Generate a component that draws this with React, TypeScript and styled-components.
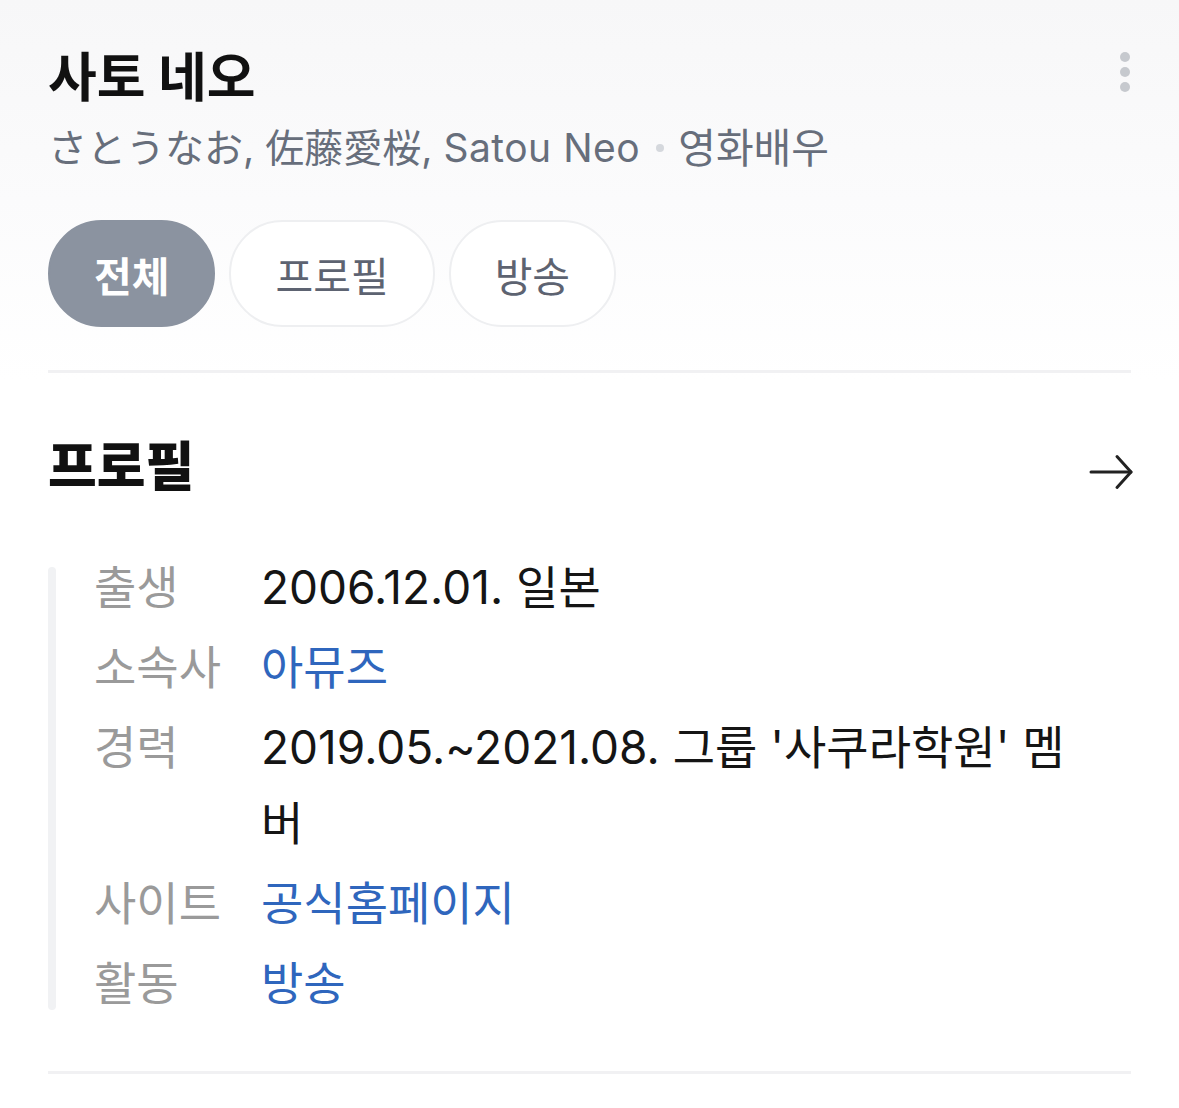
import React from "react";
import styled, {createGlobalStyle} from "styled-components";

const GlobalStyle = createGlobalStyle`
    html, body {
        margin: 0;
        padding: 0;
    }
    body {
        background: linear-gradient(180deg, #f7f7f8 0px, #fbfbfc 200px, #ffffff 380px);
        font-family: Inter, "Noto Sans CJK KR", "Noto Sans CJK JP", sans-serif;
        min-height: 1108px;
    }
`;

const Page = styled.div`
    padding: 0 48px;
`;

const Header = styled.header`
    position: relative;
    padding-top: 48px;
`;

const Title = styled.h1`
    margin: 0;
    font-size: 53px;
    line-height: 60px;
    font-weight: 700;
    color: #111;
`;

const Subtitle = styled.div`
    margin-top: 12px;
    font-size: 39px;
    line-height: 56px;
    color: #676e7b;
    display: flex;
    align-items: center;
    .latin {
        letter-spacing: 0.5px;
    }
    .ko {
        font-size: 41px;
    }
    .dot {
        width: 8px;
        height: 8px;
        border-radius: 50%;
        background: #d5d8dd;
        margin: 0 14px 0 16px;
    }
`;

const MoreButton = styled.button`
    position: absolute;
    right: -6px;
    top: 48px;
    width: 24px;
    height: 48px;
    padding: 0;
    border: 0;
    background: none;
    display: flex;
    flex-direction: column;
    align-items: center;
    justify-content: center;
    gap: 5px;
    span {
        width: 10px;
        height: 10px;
        border-radius: 50%;
        background: #c6c9ce;
    }
`;

const Tabs = styled.nav`
    margin-top: 44px;
    display: flex;
    gap: 14px;
`;

const Tab = styled.button<{active?: boolean}>`
    height: 107px;
    padding: 0 44px;
    border-radius: 54px;
    box-sizing: border-box;
    border: 2px solid ${props => props.active ? '#8b93a0' : '#eeeff1'};
    background: ${props => props.active ? '#8b93a0' : '#ffffff'};
    color: ${props => props.active ? '#ffffff' : '#5d6371'};
    font-family: inherit;
    font-size: 41px;
    font-weight: ${props => props.active ? 700 : 400};
    cursor: pointer;
`;

const Divider = styled.hr<{top: number}>`
    margin: ${props => props.top}px 0 0;
    border: 0;
    height: 3px;
    background: #f1f1f3;
`;

const SectionHead = styled.div`
    margin-top: 63px;
    display: flex;
    align-items: center;
    justify-content: space-between;
    h2 {
        margin: 0;
        font-size: 53px;
        line-height: 60px;
        font-weight: 800;
        color: #111;
    }
    svg {
        width: 48px;
        height: 48px;
        margin-right: -4px;
        margin-top: 14px;
    }
`;

const InfoBox = styled.div`
    margin-top: 51px;
    display: flex;
`;

const Bar = styled.div`
    width: 8px;
    border-radius: 4px;
    background: #f1f2f4;
    margin: 18px 0 11px;
    flex-shrink: 0;
`;

const InfoList = styled.dl`
    margin: 0 40px 0 38px;
    display: grid;
    grid-template-columns: 167px 1fr;
    row-gap: 4px;
    font-size: 46px;
    line-height: 76px;
    flex: 1;
    dt {
        color: #9a9a9a;
        white-space: nowrap;
    }
    dd {
        margin: 0;
        color: #151515;
    }
`;

const Link = styled.a`
    color: #2f66bd;
    text-decoration: none;
`;

const ArrowRight = () => (
    <svg viewBox="0 0 48 48" fill="none" stroke="#222" strokeWidth="3" strokeLinecap="round" strokeLinejoin="round">
        <path d="M4 22h40" />
        <path d="M30 6.5l14 15.5-14 15.5" />
    </svg>
);

const rows: {label: string; value: string; link?: boolean}[] = [
    {label: '출생', value: '2006.12.01. 일본'},
    {label: '소속사', value: '아뮤즈', link: true},
    {label: '경력', value: "2019.05.~2021.08. 그룹 '사쿠라학원' 멤버"},
    {label: '사이트', value: '공식홈페이지', link: true},
    {label: '활동', value: '방송', link: true},
];

const App: React.FC = () => {
    return <>
        <GlobalStyle />
        <Page>
            <Header>
                <Title>사토 네오</Title>
                <Subtitle>
                    <span>さとうなお, 佐藤愛桜, <span className="latin">Satou Neo</span></span>
                    <i className="dot" />
                    <span className="ko">영화배우</span>
                </Subtitle>
                <MoreButton aria-label="더보기">
                    <span /><span /><span />
                </MoreButton>
            </Header>
            <Tabs>
                <Tab active>전체</Tab>
                <Tab>프로필</Tab>
                <Tab>방송</Tab>
            </Tabs>
            <Divider top={43} />
            <SectionHead>
                <h2>프로필</h2>
                <ArrowRight />
            </SectionHead>
            <InfoBox>
                <Bar />
                <InfoList>
                    {rows.map(row => <React.Fragment key={row.label}>
                        <dt>{row.label}</dt>
                        <dd>{row.link ? <Link href="#">{row.value}</Link> : row.value}</dd>
                    </React.Fragment>)}
                </InfoList>
            </InfoBox>
            <Divider top={50} />
        </Page>
    </>
}
export default App;
